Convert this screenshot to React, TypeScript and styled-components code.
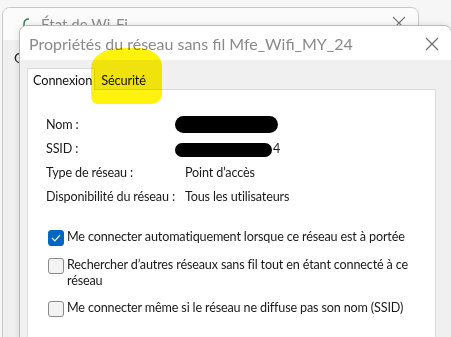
import React from "react";
import styled, { createGlobalStyle } from "styled-components";

const Global = createGlobalStyle`
  html, body { margin: 0; padding: 0; }
  body { background: #f4f4f4; font-family: Lato, "Noto Sans", sans-serif; }
`;

const Stage = styled.div`
  position: relative;
  width: 451px;
  height: 337px;
  overflow: hidden;
  background: #f6f6f6;
`;

const BackWindow = styled.div`
  position: absolute;
  left: 2px;
  top: 7px;
  width: 415px;
  height: 360px;
  border: 1px solid #c9c9c9;
  border-radius: 8px;
  background: #f0f0f0;
  overflow: hidden;
  display: flex;
  flex-direction: column;
`;

const BackTitle = styled.div`
  height: 32px;
  background: #fbfbfb;
  display: flex;
  align-items: center;
  padding-left: 20px;
  gap: 8px;
  color: #8c8c8c;
  font-size: 15px;
  position: relative;
`;

const BackBody = styled.div`
  flex: 1;
  padding: 9px 0 0 11px;
  font-size: 14px;
  color: #222;
`;

const CloseX = styled.svg<{ $right: number; $top: number }>`
  position: absolute;
  right: ${(p) => p.$right}px;
  top: ${(p) => p.$top}px;
`;

const FrontWindow = styled.div`
  position: absolute;
  left: 19px;
  top: 25px;
  width: 431px;
  height: 340px;
  border: 1px solid #b9b9b9;
  border-radius: 8px;
  background: #f0f0f0;
  overflow: hidden;
  box-shadow: 0 0 6px rgba(0, 0, 0, 0.12);
  display: flex;
  flex-direction: column;
`;

const TitleBar = styled.div`
  position: relative;
  height: 34px;
  background: #ffffff;
  display: flex;
  align-items: center;
  padding-left: 9px;
  color: #8a8a8a;
  font-size: 16px;
  white-space: nowrap;
`;

const Body = styled.div`
  flex: 1;
  padding: 8px 15px 0 7px;
  display: flex;
  flex-direction: column;
`;

const Tabs = styled.div`
  display: flex;
  height: 21px;
  align-items: flex-end;
`;

const Tab = styled.div<{ $active?: boolean }>`
  height: ${(p) => (p.$active ? 21 : 19)}px;
  padding: 0 ${(p) => (p.$active ? 2 : 6)}px 0 ${(p) => (p.$active ? 5 : 5)}px;
  display: flex;
  align-items: center;
  font-size: 12.8px;
  letter-spacing: -0.15px;
  color: #111;
  background: ${(p) => (p.$active ? "#ffffff" : "transparent")};
  border: 1px solid ${(p) => (p.$active ? "#dadada" : "transparent")};
  border-bottom: none;
  margin-bottom: ${(p) => (p.$active ? -1 : 0)}px;
  position: relative;
  z-index: 1;
  white-space: nowrap;
`;

const Panel = styled.div`
  flex: 1;
  background: #ffffff;
  border: 1px solid #dadada;
  padding: 22px 0 0 18px;
`;

const InfoGrid = styled.div`
  display: grid;
  grid-template-columns: 139px 1fr;
  grid-auto-rows: 24px;
  font-size: 12.6px;
  letter-spacing: -0.15px;
  color: #1a1a1a;
  align-items: center;
  white-space: nowrap;
`;

const Value = styled.div`
  position: relative;
`;

const Redact = styled.div<{ $w: number; $h: number; $t: number }>`
  position: absolute;
  left: -10px;
  top: ${(p) => p.$t}px;
  width: ${(p) => p.$w}px;
  height: ${(p) => p.$h}px;
  background: #000;
  border-radius: 9px;
`;

const Options = styled.div`
  margin-top: 21px;
  display: flex;
  flex-direction: column;
  gap: 11px;
  font-size: 12.6px;
  letter-spacing: -0.15px;
  color: #1a1a1a;
  padding-left: 2px;
`;

const Option = styled.label`
  display: flex;
  align-items: flex-start;
  gap: 3px;
  line-height: 16px;
  width: 372px;
`;

const Box = styled.span<{ $checked?: boolean }>`
  flex: none;
  width: 14px;
  height: 14px;
  margin-top: 1px;
  border-radius: 3px;
  border: 1px solid ${(p) => (p.$checked ? "#0067c0" : "#8a8a8a")};
  background: ${(p) => (p.$checked ? "#0067c0" : "#f3f3f3")};
  display: flex;
  align-items: center;
  justify-content: center;
`;

const Highlight = styled.div`
  position: absolute;
  left: 91px;
  top: 48px;
  width: 71px;
  height: 56px;
  background: #fff200;
  border-radius: 30px 24px 10px 6px / 20px 18px 10px 8px;
  mix-blend-mode: multiply;
  opacity: 0.95;
  z-index: 5;
`;

const X = ({ right, top, color }: { right: number; top: number; color: string }) => (
  <CloseX $right={right} $top={top} width="14" height="14" viewBox="0 0 14 14">
    <path d="M1 1 L13 13 M13 1 L1 13" stroke={color} strokeWidth="1.1" fill="none" />
  </CloseX>
);

export default function App() {
  return (
    <Stage>
      <Global />
      <BackWindow>
        <BackTitle>
          <svg width="12" height="12" viewBox="0 0 12 12">
            <path d="M1 12 L1 6 M1 6 Q1 1 6 1" stroke="#3c7d5a" strokeWidth="1.5" fill="none" />
          </svg>
          <span style={{ marginLeft: -2 }}>État de Wi-Fi</span>
          <X right={12} top={8} color="#7a7a7a" />
        </BackTitle>
        <BackBody>Général</BackBody>
      </BackWindow>
      <FrontWindow>
        <TitleBar>
          Propriétés du réseau sans fil Mfe_Wifi_MY_24
          <X right={12} top={11} color="#6a6a6a" />
        </TitleBar>
        <Body>
          <Tabs>
            <Tab $active>Connexion</Tab>
            <Tab>Sécurité</Tab>
          </Tabs>
          <Panel>
            <InfoGrid>
              <div>Nom :</div>
              <Value>
                &nbsp;
                <Redact $w={103} $h={17} $t={-1} />
              </Value>
              <div>SSID :</div>
              <Value>
                <span style={{ paddingLeft: 88 }}>4</span>
                <Redact $w={97} $h={14} $t={2} />
              </Value>
              <div>Type de réseau :</div>
              <div>Point d’accès</div>
              <div>Disponibilité du réseau :</div>
              <div>Tous les utilisateurs</div>
            </InfoGrid>
            <Options>
              <Option>
                <Box $checked>
                  <svg width="10" height="8" viewBox="0 0 10 8">
                    <path d="M1 4 L3.8 6.8 L9 1.2" stroke="#fff" strokeWidth="1.2" fill="none" />
                  </svg>
                </Box>
                Me connecter automatiquement lorsque ce réseau est à portée
              </Option>
              <Option>
                <Box />
                Rechercher d’autres réseaux sans fil tout en étant connecté à ce réseau
              </Option>
              <Option>
                <Box />
                Me connecter même si le réseau ne diffuse pas son nom (SSID)
              </Option>
            </Options>
          </Panel>
        </Body>
      </FrontWindow>
      <Highlight />
    </Stage>
  );
}
